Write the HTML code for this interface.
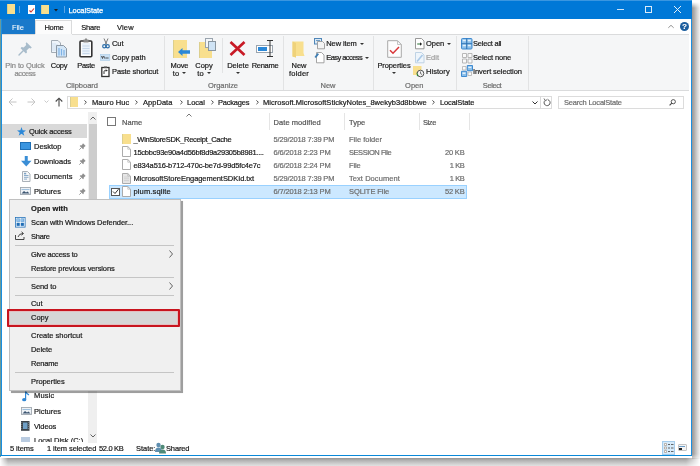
<!DOCTYPE html>
<html><head><meta charset="utf-8">
<style>
*{margin:0;padding:0;box-sizing:border-box}
html,body{width:700px;height:466px;overflow:hidden;background:#fff}
body{position:relative;font-family:"Liberation Sans",sans-serif;font-size:7.5px;color:#1a1a1a}
.t{-webkit-text-stroke:0.2px currentColor}
.w{-webkit-text-stroke:0.05px currentColor}
#w{position:absolute;left:0;top:0;width:700px;height:466px;will-change:transform}
.a{position:absolute}
.t{position:absolute;white-space:nowrap;line-height:10px}
.c{text-align:center}
svg{position:absolute;overflow:visible}
</style></head><body><div id="w">

<!-- window shadow -->
<div class="a" style="left:0;top:457.5px;width:700px;height:9px;background:linear-gradient(#959595,#b5b5b5 30%,#dcdcdc 80%,#e6e6e6);-webkit-mask-image:linear-gradient(90deg,transparent 0,#000 8px,#000 686px,transparent 700px)"></div>
<div class="a" style="left:692.3px;top:2px;width:8px;height:457px;background:linear-gradient(90deg,#9a9592,#b0b0b0 30%,#d8d8d8 70%,#f2f2f2);-webkit-mask-image:linear-gradient(transparent 0,#000 6px,#000 452px,transparent 461px)"></div>

<!-- window -->
<div class="a" style="left:0;top:0;width:692.3px;height:458px;background:#fff"></div>
<div class="a" style="left:0;top:0;width:692.3px;height:456.3px;background:#1a8ee0"></div>
<div class="a" style="left:0;top:0;width:692.3px;height:19px;background:#0078d7"></div>
<div class="a" style="left:0;top:19px;width:0.6px;height:438px;background:#6a9a9a"></div>
<div class="a" style="left:2px;top:19px;width:688.8px;height:435.5px;background:#fff"></div>
<div class="a" style="left:0;top:454.5px;width:692.3px;height:1.8px;background:#0a88d8"></div>

<!-- title bar -->
<div class="a" style="left:0;top:0;width:692px;height:1px;background:#3a96e0"></div>
<div class="a" style="left:7px;top:4px;width:8px;height:10px;background:#f8df8e;border-left:1px solid #dccf8e"></div>
<div class="a" style="left:19px;top:6px;width:1px;height:7px;background:#5aa4e6"></div>
<div class="a" style="left:28px;top:5px;width:7px;height:9px;background:#fff"></div>
<svg style="left:29px;top:8px" width="6" height="5"><path d="M0.5 2.5 L2 4 L5 0.5" stroke="#d0312d" stroke-width="1.1" fill="none"/></svg>
<div class="a" style="left:41px;top:4.5px;width:8px;height:9.5px;background:#f8df8e;border-left:1px solid #dccf8e"></div>
<svg style="left:54px;top:9px" width="5" height="3"><path d="M0 0 L4 0 L2 2.5Z" fill="#1e1e1e"/></svg>
<div class="a" style="left:64px;top:6px;width:1px;height:7px;background:#5aa4e6"></div>
<div class="t w" style="letter-spacing:-0.09px;left:68.5px;top:5.8px;color:#fff;-webkit-text-stroke:0.25px #fff">LocalState</div>
<!-- window controls -->
<div class="a" style="left:616.5px;top:9px;width:7px;height:1.4px;background:#cfe4f7"></div>
<div class="a" style="left:645px;top:6px;width:7px;height:7px;border:1px solid #dbeaf8;border-bottom-width:1.5px"></div>
<svg style="left:674px;top:6px" width="7" height="7"><path d="M0 0 L7 7 M7 0 L0 7" stroke="#e6f0fa" stroke-width="1"/></svg>

<!-- tabs row -->
<div class="a" style="left:2px;top:19px;width:33px;height:15px;background:#1979ca"></div>
<div class="t w" style="letter-spacing:-0.073px;left:12px;top:22.5px;color:#fff">File</div>
<div class="a" style="left:35px;top:20px;width:37px;height:15px;background:#fcfcfc;border:1px solid #dadbdc;border-bottom:none"></div>
<div class="t" style="letter-spacing:-0.304px;left:44.5px;top:22.5px">Home</div>
<div class="t" style="letter-spacing:-0.243px;left:81.3px;top:22.5px">Share</div>
<div class="t" style="letter-spacing:0.169px;left:117px;top:22.5px">View</div>
<svg style="left:668px;top:25px" width="6" height="3"><path d="M0.3 2.8 L3 0.3 L5.7 2.8" stroke="#888" stroke-width="0.9" fill="none"/></svg>
<div class="a" style="left:680px;top:22.3px;width:9px;height:9px;border-radius:50%;background:#1c5e9e"></div>
<div class="t" style="left:682.3px;top:21.8px;color:#fff;font-weight:bold;font-size:7.5px">?</div>

<!-- ribbon -->
<div class="a" style="left:2px;top:34px;width:687px;height:57px;background:#f5f6f7;border-top:1px solid #dadbdc;border-bottom:1px solid #dadbdc"></div>
<div class="a" style="left:35px;top:34px;width:37px;height:1px;background:#f5f6f7"></div>


<!-- ribbon separators -->
<div class="a" style="left:164px;top:36px;width:1px;height:54px;background:#e2e3e4"></div>
<div class="a" style="left:222px;top:38px;width:1px;height:35px;background:#e2e3e4"></div>
<div class="a" style="left:283px;top:36px;width:1px;height:54px;background:#e2e3e4"></div>
<div class="a" style="left:373px;top:36px;width:1px;height:54px;background:#e2e3e4"></div>
<div class="a" style="left:456px;top:36px;width:1px;height:54px;background:#e2e3e4"></div>
<div class="a" style="left:528px;top:36px;width:1px;height:54px;background:#e2e3e4"></div>

<!-- Clipboard group -->
<svg style="left:17px;top:41px" width="16" height="15"><g fill="#a8bccb"><path d="M9.5 1.2 L14.8 6.5 L13.6 7.4 L12.2 6.9 L9.6 9.5 L10 11.6 L8.9 12.5 L3.6 7.2 L4.6 6.1 L6.7 6.5 L9.2 3.9 L8.7 2.5 Z"/></g><path d="M6.2 9.8 L2 14" stroke="#a8bccb" stroke-width="1.4" stroke-linecap="round"/></svg>
<div class="t c" style="letter-spacing:-0.086px;left:4px;top:60.6px;width:42px;color:#8a8a8a">Pin to Quick</div>
<div class="t c" style="letter-spacing:-0.424px;left:4px;top:68.6px;width:42px;color:#8a8a8a">access</div>

<svg style="left:51px;top:40px" width="17" height="18"><path d="M0.5 0.5 L7 0.5 L9.5 3 L9.5 12.5 L0.5 12.5 Z" fill="#eef4fa" stroke="#a3acb5"/><path d="M2 3 L2 11 M4 3 L4 11 M6 4 L6 11" stroke="#c5d9ec" stroke-width="0.8"/><path d="M5.5 5.5 L12.5 5.5 L15.5 8.5 L15.5 17 L5.5 17 Z" fill="#d3e6f7" stroke="#8d98a3"/><path d="M8 8 L8 15.5 M10.5 9 L10.5 15.5 M13 10 L13 15.5" stroke="#7fb2e5" stroke-width="1.2"/></svg>
<div class="t c" style="letter-spacing:-0.254px;left:44px;top:60.6px;width:30px">Copy</div>

<svg style="left:79px;top:38px" width="14" height="20"><rect x="1" y="3" width="11.8" height="15.8" rx="1" fill="#fdfdfd" stroke="#333" stroke-width="1.6"/><rect x="3" y="5" width="8" height="12" fill="#eaf2fa"/><path d="M3.5 8 L10.5 8 M3.5 10.5 L10.5 10.5 M3.5 13 L10.5 13 M3.5 15.5 L10.5 15.5" stroke="#b8cde2" stroke-width="0.7"/><rect x="4.5" y="1.5" width="5" height="3" fill="#8a8a8a"/><rect x="6" y="0.5" width="2" height="1.5" fill="#8a8a8a"/></svg>
<div class="t c" style="letter-spacing:-0.317px;left:71px;top:60.6px;width:30px">Paste</div>

<svg style="left:101.5px;top:38px" width="8" height="11"><path d="M2 0.5 L4.6 6.5 M6 0.5 L3.4 6.5" stroke="#6a6a6a" stroke-width="0.9"/><circle cx="2.3" cy="8.3" r="1.6" fill="none" stroke="#2c6da8" stroke-width="1.2"/><circle cx="5.7" cy="8.3" r="1.6" fill="none" stroke="#2c6da8" stroke-width="1.2"/></svg>
<div class="t" style="letter-spacing:-0.091px;left:112px;top:39.1px">Cut</div>
<svg style="left:100px;top:54px" width="10" height="7"><rect x="0.3" y="0.5" width="9.5" height="6" fill="#c9e0f4" stroke="#a9cbe8" stroke-width="0.6"/><path d="M1.5 2 L2.5 4.5 L3.3 2 M3.8 2 L4.6 4.5 M5.3 4 L8.6 4" stroke="#333" stroke-width="0.8" fill="none"/></svg>
<div class="t" style="letter-spacing:-0.067px;left:112px;top:52.6px">Copy path</div>
<svg style="left:101px;top:65.5px" width="9" height="11"><rect x="0.8" y="1.5" width="7.2" height="9" fill="#fff" stroke="#333" stroke-width="1.3"/><rect x="3" y="0.5" width="3" height="1.6" fill="#555"/><path d="M3 8 L3 5.5 Q3 4.5 4.5 4.5 L6 4.5 M5 3.5 L6 4.5 L5 5.5" stroke="#222" stroke-width="0.9" fill="none"/></svg>
<div class="t" style="letter-spacing:-0.125px;left:112px;top:66.6px">Paste shortcut</div>
<div class="t c" style="left:57px;top:81.1px;width:50px;color:#6d6d6d">Clipboard</div>

<!-- Organize group -->
<div class="a" style="left:173px;top:40px;width:14px;height:18px;background:#f8df8e;border-left:1px solid #dccf8e"></div>
<svg style="left:178px;top:48px" width="12" height="8"><path d="M0 4 L4.5 0 L4.5 2.3 L12 2.3 L12 5.7 L4.5 5.7 L4.5 8 Z" fill="#2b88d8"/></svg>
<div class="t c" style="letter-spacing:-0.136px;left:164px;top:60.6px;width:31px">Move</div>
<div class="t c" style="left:164px;top:68.6px;width:31px">to<span style="display:inline-block;width:0;height:0;border-left:2px solid transparent;border-right:2px solid transparent;border-top:2px solid #333;vertical-align:1.5px;margin-left:3px"></span></div>

<div class="a" style="left:199px;top:42px;width:13px;height:16px;background:#f8df8e;border-left:1px solid #dccf8e"></div>
<div class="a" style="left:205px;top:38px;width:8px;height:10px;background:#f4f7fa;border:1px solid #9aa4ae"></div>
<div class="a" style="left:208px;top:41px;width:8px;height:10px;background:#cfe3f5;border:1px solid #8a96a0"></div>
<div class="t c" style="letter-spacing:-0.029px;left:189px;top:60.6px;width:30px">Copy</div>
<div class="t c" style="left:189px;top:68.6px;width:30px">to<span style="display:inline-block;width:0;height:0;border-left:2px solid transparent;border-right:2px solid transparent;border-top:2px solid #333;vertical-align:1.5px;margin-left:3px"></span></div>

<svg style="left:229px;top:41px" width="17" height="15"><path d="M1.5 1 L15.5 14 M15.5 1 L1.5 14" stroke="#c81a26" stroke-width="2.7"/></svg>
<div class="t c" style="left:223px;top:60.6px;width:30px">Delete</div>
<div class="t c" style="left:223px;top:68.6px;width:30px"><span style="display:inline-block;width:0;height:0;border-left:2px solid transparent;border-right:2px solid transparent;border-top:2px solid #333;vertical-align:1.5px;margin-left:0"></span></div>

<div class="a" style="left:256px;top:45px;width:17px;height:8px;background:#fff;border:1px solid #9aa4ae"></div>
<div class="a" style="left:258px;top:47px;width:9px;height:4px;background:#2b88d8"></div>
<svg style="left:266px;top:40px" width="8" height="17"><path d="M1 0.5 L7 0.5 M4 0.5 L4 16.5 M1 16.5 L7 16.5" stroke="#333" stroke-width="1"/></svg>
<div class="t c" style="letter-spacing:-0.31px;left:249px;top:60.6px;width:32px">Rename</div>
<div class="t c" style="letter-spacing:-0.067px;left:203px;top:81.1px;width:40px;color:#6d6d6d">Organize</div>

<!-- New group -->
<svg style="left:292px;top:41px" width="13" height="17"><path d="M0.5 0.5 L11.5 0.5 L11.5 12 L12.5 15 L4 15 L4 16.5 L0.5 15.5 Z" fill="#f8df8e"/><path d="M0.5 0.5 L4 2 L4 16.5 L0.5 15.5 Z" fill="#efd27a"/></svg>
<div class="t c" style="letter-spacing:0.028px;left:284px;top:60.6px;width:30px">New</div>
<div class="t c" style="letter-spacing:0.206px;left:284px;top:68.6px;width:30px">folder</div>
<svg style="left:313.5px;top:38px" width="12" height="12"><rect x="0.5" y="0.5" width="7" height="5.5" fill="#dbe9f5" stroke="#4f86b8" stroke-width="1"/><path d="M2 2.5 L6 2.5" stroke="#4f86b8" stroke-width="0.8"/><path d="M3.5 3.5 L8.5 3.5 L10.5 5.5 L10.5 10.8 L3.5 10.8 Z" fill="#f4f4f4" stroke="#9a9a9a" stroke-width="0.9"/></svg>
<div class="t" style="letter-spacing:-0.12px;left:326.3px;top:39.1px">New item<span style="display:inline-block;width:0;height:0;border-left:2px solid transparent;border-right:2px solid transparent;border-top:2px solid #333;vertical-align:1.5px;margin-left:3px"></span></div>
<svg style="left:313.5px;top:51.5px" width="11" height="12"><path d="M2.5 0.5 L7.5 0.5 L10 3 L10 10.8 L2.5 10.8 Z" fill="#fff" stroke="#9a9a9a" stroke-width="0.9"/><path d="M0.5 5 L3.5 1 L5 2.2 L2 6 Z" fill="#3f7fb5"/></svg>
<div class="t" style="letter-spacing:-0.57px;left:326.3px;top:53.1px">Easy access<span style="display:inline-block;width:0;height:0;border-left:2px solid transparent;border-right:2px solid transparent;border-top:2px solid #333;vertical-align:1.5px;margin-left:3px"></span></div>
<div class="t c" style="left:313px;top:81.1px;width:30px;color:#6d6d6d">New</div>

<!-- Open group -->
<svg style="left:386.5px;top:39.5px" width="16" height="19"><path d="M0.7 0.7 L10.5 0.7 L14.3 4.5 L14.3 17.3 L0.7 17.3 Z" fill="#fdfdfd" stroke="#a9a9a9" stroke-width="1"/><path d="M10.5 0.7 L10.5 4.5 L14.3 4.5" fill="none" stroke="#b5b5b5" stroke-width="0.8"/><path d="M3 10.3 L6 13.3 L12 7" stroke="#d9373a" stroke-width="1.5" fill="none"/></svg>
<div class="t c" style="letter-spacing:-0.109px;left:376px;top:60.6px;width:36px">Properties</div>
<div class="t c" style="left:376px;top:68.6px;width:36px"><span style="display:inline-block;width:0;height:0;border-left:2px solid transparent;border-right:2px solid transparent;border-top:2px solid #333;vertical-align:1.5px;margin-left:0"></span></div>
<svg style="left:414.5px;top:38px" width="10" height="12"><path d="M0.5 0.5 L6.5 0.5 L9 3 L9 10.8 L0.5 10.8 Z" fill="#fff" stroke="#8c8c8c" stroke-width="0.9"/><path d="M2.2 6 L6.3 6" stroke="#3a7d44" stroke-width="1.1"/><path d="M5 4.3 L7 6 L5 7.7 Z" fill="#222"/></svg>
<div class="t" style="letter-spacing:-0.05px;left:426px;top:39.1px">Open<span style="display:inline-block;width:0;height:0;border-left:2px solid transparent;border-right:2px solid transparent;border-top:2px solid #333;vertical-align:1.5px;margin-left:3px"></span></div>
<svg style="left:414.5px;top:51.5px" width="10" height="12"><path d="M0.5 0.5 L6.5 0.5 L9 3 L9 10.8 L0.5 10.8 Z" fill="#eef5fb" stroke="#b9cfe2" stroke-width="0.9"/><path d="M2 9.5 L7.5 3" stroke="#a9c8e6" stroke-width="1.6"/></svg>
<div class="t" style="letter-spacing:0.041px;left:426px;top:53.1px;color:#a0a0a0">Edit</div>
<svg style="left:413px;top:65.5px" width="12" height="12"><rect x="0" y="0" width="8.5" height="9" fill="#f8df8e"/><circle cx="7.5" cy="7.5" r="3.3" fill="#f2f2f2" stroke="#555" stroke-width="1"/><path d="M7.5 5.5 L7.5 7.5 L9 8.5" stroke="#555" stroke-width="0.8" fill="none"/><path d="M3.5 6 L5.5 9.5 L4 10.5 Z" fill="#2f8a3c"/></svg>
<div class="t" style="letter-spacing:0.051px;left:426px;top:66.6px">History</div>
<div class="t c" style="left:399.3px;top:81.1px;width:30px;color:#6d6d6d">Open</div>

<!-- Select group -->
<svg style="left:460.5px;top:38px" width="12" height="12"><rect x="0.5" y="0.5" width="10.5" height="10.5" rx="1" fill="#8cc0ea" stroke="#3f8ad0" stroke-width="1"/><path d="M5.75 0.5 L5.75 11 M0.5 5.75 L11 5.75" stroke="#2a6fb0" stroke-width="1"/><path d="M1.8 1.8 h3 v1.5 h-3z M6.8 1.8 h3 v1.5 h-3z M1.8 6.8 h3 v1.5 h-3z M6.8 6.8 h3 v1.5 h-3z" fill="#e3f0fb"/></svg>
<div class="t" style="letter-spacing:-0.214px;left:473px;top:39.1px">Select all</div>
<svg style="left:461.5px;top:52.5px" width="11" height="11"><path d="M0.5 0.5 h4 v4 h-4z M6 0.5 h4 v4 h-4z M0.5 6 h4 v4 h-4z M6 6 h4 v4 h-4z" fill="#fafafa" stroke="#b0b0b0" stroke-width="0.9"/></svg>
<div class="t" style="letter-spacing:-0.148px;left:473px;top:53.1px">Select none</div>
<svg style="left:460.5px;top:65px" width="12" height="12"><path d="M1.5 1.5 h3.5 v3.5 h-3.5z M7 7 h3.5 v3.5 h-3.5z" fill="#fafafa" stroke="#b0b0b0" stroke-width="0.8"/><path d="M6.3 0.5 h5.2 v5.2 h-5.2z M0.5 6.3 h5.2 v5.2 h-5.2z" fill="#8cc0ea" stroke="#3f8ad0" stroke-width="1"/><path d="M7.3 1.8 h3 v1.3 h-3z M1.5 7.6 h3 v1.3 h-3z" fill="#e3f0fb"/></svg>
<div class="t" style="letter-spacing:-0.103px;left:473px;top:66.6px">Invert selection</div>
<div class="t c" style="letter-spacing:-0.427px;left:477px;top:81.1px;width:30px;color:#6d6d6d">Select</div>


<!-- address bar row -->
<svg style="left:8px;top:98px" width="9" height="8"><path d="M8.5 4 L1 4 M4.5 0.5 L1 4 L4.5 7.5" stroke="#c4c4c4" stroke-width="1" fill="none"/></svg>
<svg style="left:27px;top:98px" width="9" height="8"><path d="M0.5 4 L8 4 M4.5 0.5 L8 4 L4.5 7.5" stroke="#c4c4c4" stroke-width="1" fill="none"/></svg>
<svg style="left:44px;top:100px" width="5" height="3"><path d="M0.5 0.5 L2.5 2.5 L4.5 0.5" stroke="#c4c4c4" stroke-width="0.9" fill="none"/></svg>
<svg style="left:55px;top:97px" width="8" height="10"><path d="M4 9.5 L4 1.2 M0.7 4.5 L4 1.2 L7.3 4.5" stroke="#4a4a4a" stroke-width="1.1" fill="none"/></svg>
<div class="a" style="left:67px;top:95.7px;width:485px;height:13.5px;border:1px solid #dcdcdc;background:#fff"></div>
<div class="a" style="left:540px;top:96px;width:1px;height:13px;background:#d9d9d9"></div>
<div class="a" style="left:70px;top:97px;width:8px;height:10px;background:#f8df8e;border-left:1px solid #dccf8e"></div>
<svg style="left:83.5px;top:100px" width="3" height="5"><path d="M0.4 0.4 L2.4 2.3 L0.4 4.2" stroke="#505050" stroke-width="1" fill="none"/></svg>
<div class="t" style="letter-spacing:0.079px;left:92px;top:97.5px">Mauro Huc</div>
<svg style="left:134.5px;top:100px" width="3" height="5"><path d="M0.4 0.4 L2.4 2.3 L0.4 4.2" stroke="#505050" stroke-width="1" fill="none"/></svg>
<div class="t" style="letter-spacing:0.03px;left:143px;top:97.5px">AppData</div>
<svg style="left:179.5px;top:100px" width="3" height="5"><path d="M0.4 0.4 L2.4 2.3 L0.4 4.2" stroke="#505050" stroke-width="1" fill="none"/></svg>
<div class="t" style="left:187px;top:97.5px">Local</div>
<svg style="left:211.0px;top:100px" width="3" height="5"><path d="M0.4 0.4 L2.4 2.3 L0.4 4.2" stroke="#505050" stroke-width="1" fill="none"/></svg>
<div class="t" style="letter-spacing:-0.205px;left:218px;top:97.5px">Packages</div>
<svg style="left:255.5px;top:100px" width="3" height="5"><path d="M0.4 0.4 L2.4 2.3 L0.4 4.2" stroke="#505050" stroke-width="1" fill="none"/></svg>
<div class="t" style="letter-spacing:0.023px;left:263px;top:97.5px">Microsoft.MicrosoftStickyNotes_8wekyb3d8bbwe</div>
<svg style="left:431.5px;top:100px" width="3" height="5"><path d="M0.4 0.4 L2.4 2.3 L0.4 4.2" stroke="#505050" stroke-width="1" fill="none"/></svg>
<div class="t" style="letter-spacing:-0.125px;left:440px;top:97.5px">LocalState</div>
<svg style="left:532px;top:101px" width="6" height="4"><path d="M0.5 0.5 L3 3 L5.5 0.5" stroke="#333" stroke-width="1" fill="none"/></svg>
<svg style="left:543px;top:98px" width="8" height="9"><path d="M2 2.5 A3 3 0 1 0 5 1.8" stroke="#555" stroke-width="1" fill="none"/><path d="M1 0.5 L2.5 2.8 L4.5 1.2" stroke="#555" stroke-width="0.9" fill="none"/></svg>
<div class="a" style="left:558px;top:95.7px;width:126px;height:13.5px;border:1px solid #dcdcdc;background:#fff"></div>
<div class="t" style="letter-spacing:-0.206px;left:564px;top:97.5px;color:#6d6d6d">Search LocalState</div>
<svg style="left:669px;top:99px" width="7" height="7"><circle cx="4.3" cy="2.7" r="2.1" stroke="#444" stroke-width="0.9" fill="none"/><path d="M2.8 4.2 L0.6 6.4" stroke="#444" stroke-width="1.1"/></svg>

<!-- nav pane -->
<div class="a" style="left:2px;top:124px;width:85px;height:14px;background:#d9d9d9"></div>
<div class="a" style="left:88px;top:112px;width:9px;height:331px;background:#efefef"></div>
<div class="a" style="left:88.5px;top:124px;width:8.5px;height:256px;background:#cdcdcd"></div>
<svg style="left:90px;top:116px" width="6" height="4"><path d="M0.5 3.5 L3 1 L5.5 3.5" stroke="#606060" stroke-width="1" fill="none"/></svg>
<svg style="left:90px;top:434px" width="6" height="4"><path d="M0.5 0.5 L3 3 L5.5 0.5" stroke="#606060" stroke-width="1" fill="none"/></svg>
<svg style="left:17px;top:127px" width="9" height="9"><path d="M4.5 0 L5.6 3.3 L9 3.4 L6.3 5.5 L7.3 8.8 L4.5 6.8 L1.7 8.8 L2.7 5.5 L0 3.4 L3.4 3.3Z" fill="#2b88d8"/></svg>
<div class="t" style="letter-spacing:-0.159px;left:29px;top:126.6px">Quick access</div>

<div class="a" style="left:20px;top:142px;width:11px;height:8px;background:#3a95e0;border:1px solid #1f6fb5"></div>
<div class="t" style="letter-spacing:-0.031px;left:34px;top:141.6px">Desktop</div>
<svg style="left:20.5px;top:155.5px" width="11" height="11"><path d="M5.25 0 L5.25 6" stroke="#3a8ed6" stroke-width="3"/><path d="M0 4.8 L5.25 10.5 L10.5 4.8Z" fill="#3a8ed6"/></svg>
<div class="t" style="left:34px;top:156.6px">Downloads</div>
<svg style="left:21.5px;top:170.5px" width="9" height="12"><path d="M0.5 0.5 L5.5 0.5 L8 3 L8 10.5 L0.5 10.5 Z" fill="#f6f7f8" stroke="#a0a8b0" stroke-width="0.9"/><path d="M2 4.5 L6.5 4.5 M2 6.3 L6.5 6.3 M2 8.1 L5 8.1" stroke="#7fa3c4" stroke-width="0.9"/><rect x="2" y="1.8" width="2.2" height="1.6" fill="#7fa3c4"/></svg>
<div class="t" style="letter-spacing:0.062px;left:34px;top:171.6px">Documents</div>
<svg style="left:20px;top:186.5px" width="11" height="8"><rect x="0.5" y="0.5" width="10" height="7" fill="#eef2f6" stroke="#a0a8b0" stroke-width="0.9"/><path d="M1.5 6.5 L4 4 L6 5.5 L7.5 4.5 L9.5 6.5 Z" fill="#3c5570"/><rect x="1.5" y="2" width="8" height="1" fill="#9fc0dd"/></svg>
<div class="t" style="letter-spacing:-0.024px;left:34px;top:186.6px">Pictures</div>
<svg style="left:79px;top:143px" width="7" height="7"><path d="M4 0.3 L6.7 3 L5.8 3.5 L4.6 4.7 L4.7 5.8 L4.1 6.3 L0.7 2.9 L1.2 2.3 L2.3 2.4 L3.5 1.2 Z" fill="#8f8f8f"/><path d="M2.3 4.7 L0.3 6.7" stroke="#8f8f8f" stroke-width="0.9"/></svg>
<svg style="left:79px;top:157.5px" width="7" height="7"><path d="M4 0.3 L6.7 3 L5.8 3.5 L4.6 4.7 L4.7 5.8 L4.1 6.3 L0.7 2.9 L1.2 2.3 L2.3 2.4 L3.5 1.2 Z" fill="#8f8f8f"/><path d="M2.3 4.7 L0.3 6.7" stroke="#8f8f8f" stroke-width="0.9"/></svg>
<svg style="left:79px;top:172.5px" width="7" height="7"><path d="M4 0.3 L6.7 3 L5.8 3.5 L4.6 4.7 L4.7 5.8 L4.1 6.3 L0.7 2.9 L1.2 2.3 L2.3 2.4 L3.5 1.2 Z" fill="#8f8f8f"/><path d="M2.3 4.7 L0.3 6.7" stroke="#8f8f8f" stroke-width="0.9"/></svg>
<svg style="left:79px;top:187.5px" width="7" height="7"><path d="M4 0.3 L6.7 3 L5.8 3.5 L4.6 4.7 L4.7 5.8 L4.1 6.3 L0.7 2.9 L1.2 2.3 L2.3 2.4 L3.5 1.2 Z" fill="#8f8f8f"/><path d="M2.3 4.7 L0.3 6.7" stroke="#8f8f8f" stroke-width="0.9"/></svg>

<svg style="left:22px;top:390.5px" width="8" height="11"><path d="M3.6 8.5 L3.6 0.5 Q4.5 2.5 7 4" stroke="#2f86d3" stroke-width="1.2" fill="none"/><ellipse cx="2.2" cy="8.7" rx="2.1" ry="1.6" fill="#2f86d3"/></svg>
<div class="t" style="letter-spacing:0.181px;left:34px;top:391px">Music</div>
<svg style="left:20.5px;top:407px" width="11" height="8"><rect x="0.5" y="0.5" width="10" height="7" fill="#eef2f6" stroke="#a0a8b0" stroke-width="0.9"/><path d="M1.5 6.5 L4 4 L6 5.5 L7.5 4.5 L9.5 6.5 Z" fill="#3c5570"/><rect x="1.5" y="2" width="8" height="1" fill="#9fc0dd"/></svg>
<div class="t" style="left:34px;top:406.5px">Pictures</div>
<svg style="left:21px;top:421px" width="9" height="10"><rect x="0" y="0" width="8.5" height="9.8" fill="#3b4249"/><rect x="2" y="1.5" width="4.5" height="6.5" fill="#6f9fc6"/><path d="M0.8 1 v8 M7.7 1 v8" stroke="#8a9096" stroke-width="0.8" stroke-dasharray="1 1"/></svg>
<div class="t" style="letter-spacing:-0.099px;left:34px;top:421.5px">Videos</div>
<div class="a" style="left:2px;top:430px;width:86px;height:11.8px;overflow:hidden"><div class="a" style="left:19px;top:7px;width:9px;height:8px;background:#b9cbe0"></div>
<div class="t" style="left:32px;top:6px">Local Disk (C:)</div></div>

<!-- file list header -->
<div class="a" style="left:107px;top:117px;width:9px;height:9px;border:1px solid #777"></div>
<svg style="left:186px;top:113px" width="6" height="4"><path d="M0.5 3.5 L3 1 L5.5 3.5" stroke="#666" stroke-width="0.9" fill="none"/></svg>
<div class="t" style="letter-spacing:0.046px;left:122px;top:117.5px;color:#555">Name</div>
<div class="a" style="left:269px;top:113px;width:1px;height:17px;background:#e5e5e5"></div>
<div class="t" style="letter-spacing:0.071px;left:273.5px;top:117.5px;color:#555">Date modified</div>
<div class="a" style="left:344px;top:113px;width:1px;height:17px;background:#e5e5e5"></div>
<div class="t" style="left:349px;top:117.5px;color:#555">Type</div>
<div class="a" style="left:419px;top:113px;width:1px;height:17px;background:#e5e5e5"></div>
<div class="t" style="letter-spacing:-0.423px;left:423px;top:117.5px;color:#555">Size</div>
<div class="a" style="left:469px;top:113px;width:1px;height:17px;background:#e5e5e5"></div>

<!-- file rows -->
<div class="a" style="left:109px;top:185px;width:358px;height:13.5px;background:#cce8ff;border:1px solid #99d1ff"></div>
<div class="a" style="left:111px;top:187.5px;width:9px;height:8.5px;border:1px solid #555;background:#fff"></div>
<svg style="left:112px;top:188px" width="7" height="7"><path d="M1 3.5 L3 5.5 L6.5 1.2" stroke="#333" stroke-width="1" fill="none"/></svg>

<div class="a" style="left:122px;top:134px;width:9px;height:10px;background:#f8df8e;border-left:1px solid #dccf8e"></div>
<div class="t" style="letter-spacing:-0.311px;left:133.5px;top:135.4px">_WinStoreSDK_Receipt_Cache</div>
<div class="t" style="letter-spacing:-0.152px;left:273.5px;top:135.4px;color:#6d6d6d">5/29/2018 7:39 PM</div>
<div class="t" style="left:349px;top:135.4px;color:#6d6d6d">File folder</div>

<svg style="left:121.5px;top:146px" width="10" height="12"><path d="M0.5 0.5 L5.8 0.5 L8.5 3.2 L8.5 10.5 L0.5 10.5 Z" fill="#fff" stroke="#a3a3a3" stroke-width="0.9"/><path d="M5.8 0.5 L5.8 3.2 L8.5 3.2" fill="none" stroke="#b5b5b5" stroke-width="0.7"/></svg>
<div class="t" style="letter-spacing:-0.241px;left:133.5px;top:148.4px">15cbbc93e90a4d56bf8d9a29305b8981....</div>
<div class="t" style="letter-spacing:-0.132px;left:273.5px;top:148.4px;color:#6d6d6d">6/6/2018 2:23 PM</div>
<div class="t" style="letter-spacing:-0.443px;left:349px;top:148.4px;color:#6d6d6d">SESSION File</div>
<div class="t" style="letter-spacing:-0.18px;left:420.5px;top:148.4px;width:44px;text-align:right;color:#6d6d6d">20 KB</div>

<svg style="left:121.5px;top:159.3px" width="10" height="12"><path d="M0.5 0.5 L5.8 0.5 L8.5 3.2 L8.5 10.5 L0.5 10.5 Z" fill="#fff" stroke="#a3a3a3" stroke-width="0.9"/><path d="M5.8 0.5 L5.8 3.2 L8.5 3.2" fill="none" stroke="#b5b5b5" stroke-width="0.7"/></svg>
<div class="t" style="letter-spacing:-0.141px;left:133.5px;top:161.4px">e834a516-b712-470c-be7d-99d5fc4e7c</div>
<div class="t" style="letter-spacing:-0.132px;left:273.5px;top:161.4px;color:#6d6d6d">6/6/2018 2:24 PM</div>
<div class="t" style="letter-spacing:-0.123px;left:349px;top:161.4px;color:#6d6d6d">File</div>
<div class="t" style="letter-spacing:-0.375px;left:420.5px;top:161.4px;width:44px;text-align:right;color:#6d6d6d">1 KB</div>

<svg style="left:121.5px;top:172.5px" width="10" height="12"><path d="M0.5 0.5 L5.8 0.5 L8.5 3.2 L8.5 10.5 L0.5 10.5 Z" fill="#e6e6e6" stroke="#a3a3a3" stroke-width="0.9"/><path d="M5.8 0.5 L5.8 3.2 L8.5 3.2" fill="none" stroke="#b5b5b5" stroke-width="0.7"/><path d="M2 4 L7 4 M2 5.8 L7 5.8 M2 7.6 L7 7.6" stroke="#c8c8c8" stroke-width="0.7"/></svg>
<div class="t" style="letter-spacing:-0.062px;left:133.5px;top:174.4px">MicrosoftStoreEngagementSDKId.txt</div>
<div class="t" style="letter-spacing:-0.152px;left:273.5px;top:174.4px;color:#6d6d6d">5/29/2018 7:39 PM</div>
<div class="t" style="letter-spacing:0.059px;left:349px;top:174.4px;color:#6d6d6d">Text Document</div>
<div class="t" style="letter-spacing:-0.375px;left:420.5px;top:174.4px;width:44px;text-align:right;color:#6d6d6d">1 KB</div>

<svg style="left:121.5px;top:186px" width="10" height="12"><path d="M0.5 0.5 L5.8 0.5 L8.5 3.2 L8.5 10.5 L0.5 10.5 Z" fill="#fff" stroke="#a3a3a3" stroke-width="0.9"/><path d="M5.8 0.5 L5.8 3.2 L8.5 3.2" fill="none" stroke="#b5b5b5" stroke-width="0.7"/></svg>
<div class="t" style="letter-spacing:0.14px;left:133.5px;top:187.1px">plum.sqlite</div>
<div class="t" style="letter-spacing:-0.132px;left:273.5px;top:187.1px;color:#6d6d6d">6/7/2018 2:13 PM</div>
<div class="t" style="letter-spacing:-0.059px;left:349px;top:187.1px;color:#6d6d6d">SQLITE File</div>
<div class="t" style="letter-spacing:-0.18px;left:420.5px;top:187.1px;width:44px;text-align:right;color:#6d6d6d">52 KB</div>

<!-- status bar -->
<div class="t" style="letter-spacing:-0.07px;left:10px;top:444.0px">5 items</div>
<div class="t" style="letter-spacing:-0.077px;left:47px;top:444.0px">1 item selected</div>
<div class="t" style="letter-spacing:-0.341px;left:99px;top:444.0px">52.0 KB</div>
<div class="t" style="letter-spacing:-0.035px;left:136px;top:444.0px">State:</div>
<svg style="left:155px;top:441.5px" width="11" height="12"><circle cx="3.5" cy="3" r="2.2" fill="#5f8fb0"/><path d="M0 10 Q0 5.5 3.5 5.5 Q7 5.5 7 10 Z" fill="#5f8fb0"/><circle cx="7.5" cy="5" r="2.2" fill="#4f8a78"/><path d="M4 11.5 Q4 7.5 7.5 7.5 Q11 7.5 11 11.5 Z" fill="#4f8a78"/></svg>
<div class="t" style="letter-spacing:-0.148px;left:166px;top:444.0px">Shared</div>
<div class="a" style="left:661.5px;top:441px;width:13.5px;height:14px;background:#d5eafa;border:1px solid #a6cdec"></div>
<svg style="left:663.5px;top:443px" width="10" height="11"><path d="M0.5 0.5 h2 v2 h-2z M0.5 4 h2 v2 h-2z M0.5 7.5 h2 v2 h-2z" fill="#fff" stroke="#9a8a7a" stroke-width="0.6"/><path d="M4 1.5 h2 M7 1.5 h2.5 M4 5 h2 M7 5 h2.5 M4 8.5 h2 M7 8.5 h2.5" stroke="#555" stroke-width="0.9"/></svg>
<div class="a" style="left:677.5px;top:444px;width:9px;height:7px;background:#f4f4f4;border:1px solid #c4c4c4;border-radius:1px"></div>
<div class="a" style="left:679px;top:446px;width:6px;height:1px;background:#6a9cc8"></div>
<div class="a" style="left:679px;top:447.5px;width:3px;height:2px;background:#222"></div>

<!-- context menu -->
<div class="a" style="left:9px;top:199px;width:172px;height:192px;background:#f0f0f0;border:1px solid #c0c0c0;box-shadow:1.5px 1.5px 0.6px rgba(0,0,0,0.38)"></div>
<div class="t" style="letter-spacing:0.061px;left:31px;top:203.5px;font-weight:bold">Open with</div>
<svg style="left:15px;top:217px" width="11" height="11"><rect x="0" y="0" width="10.5" height="10.5" fill="#1f6db5"/><rect x="1.2" y="1.2" width="8.1" height="8.1" fill="none" stroke="#e8f1fa" stroke-width="0.9"/><path d="M5.25 1 L5.25 9.5 M1 5.25 L9.5 5.25" stroke="#fff" stroke-width="1"/><rect x="1.8" y="1.8" width="3" height="3" fill="#8fc0ea"/><rect x="5.7" y="1.8" width="3" height="3" fill="#8fc0ea"/></svg>
<div class="t" style="letter-spacing:-0.056px;left:31px;top:218.0px">Scan with Windows Defender...</div>
<svg style="left:15px;top:231px" width="10" height="9"><path d="M0.5 4 L0.5 8.5 L9 8.5 L9 6 M3 6 Q4 2.5 8 2.5 M6.5 0.8 L8.5 2.5 L6.5 4.2" stroke="#333" stroke-width="0.9" fill="none"/></svg>
<div class="t" style="letter-spacing:-0.243px;left:31px;top:231.5px">Share</div>
<div class="a" style="left:15px;top:244.5px;width:159px;height:1px;background:#c5c5c5"></div>
<div class="t" style="letter-spacing:-0.192px;left:31px;top:249.5px">Give access to</div>
<svg style="left:169px;top:250px" width="4" height="8"><path d="M0.5 0.5 L3.5 4 L0.5 7.5" stroke="#555" stroke-width="0.9" fill="none"/></svg>
<div class="t" style="letter-spacing:-0.125px;left:31px;top:263.5px">Restore previous versions</div>
<div class="a" style="left:15px;top:276.5px;width:159px;height:1px;background:#c5c5c5"></div>
<div class="t" style="letter-spacing:-0.08px;left:31px;top:281.5px">Send to</div>
<svg style="left:169px;top:282px" width="4" height="8"><path d="M0.5 0.5 L3.5 4 L0.5 7.5" stroke="#555" stroke-width="0.9" fill="none"/></svg>
<div class="a" style="left:15px;top:294.5px;width:159px;height:1px;background:#c5c5c5"></div>
<div class="t" style="letter-spacing:-0.091px;left:31px;top:299.0px">Cut</div>
<div class="a" style="left:7px;top:309px;width:173px;height:18px;background:#d6d6d6;border:2.5px solid #c8141e;border-radius:1px;box-shadow:inset 0 0 0 0.6px #f2a6aa"></div>
<div class="t" style="left:31px;top:312.8px">Copy</div>
<div class="t" style="left:31px;top:331.3px">Create shortcut</div>
<div class="t" style="letter-spacing:-0.098px;left:31px;top:345.3px">Delete</div>
<div class="t" style="letter-spacing:-0.177px;left:31px;top:358.8px">Rename</div>
<div class="a" style="left:15px;top:371.5px;width:159px;height:1px;background:#c5c5c5"></div>
<div class="t" style="letter-spacing:-0.059px;left:31px;top:376.8px">Properties</div>

</div></body></html>
